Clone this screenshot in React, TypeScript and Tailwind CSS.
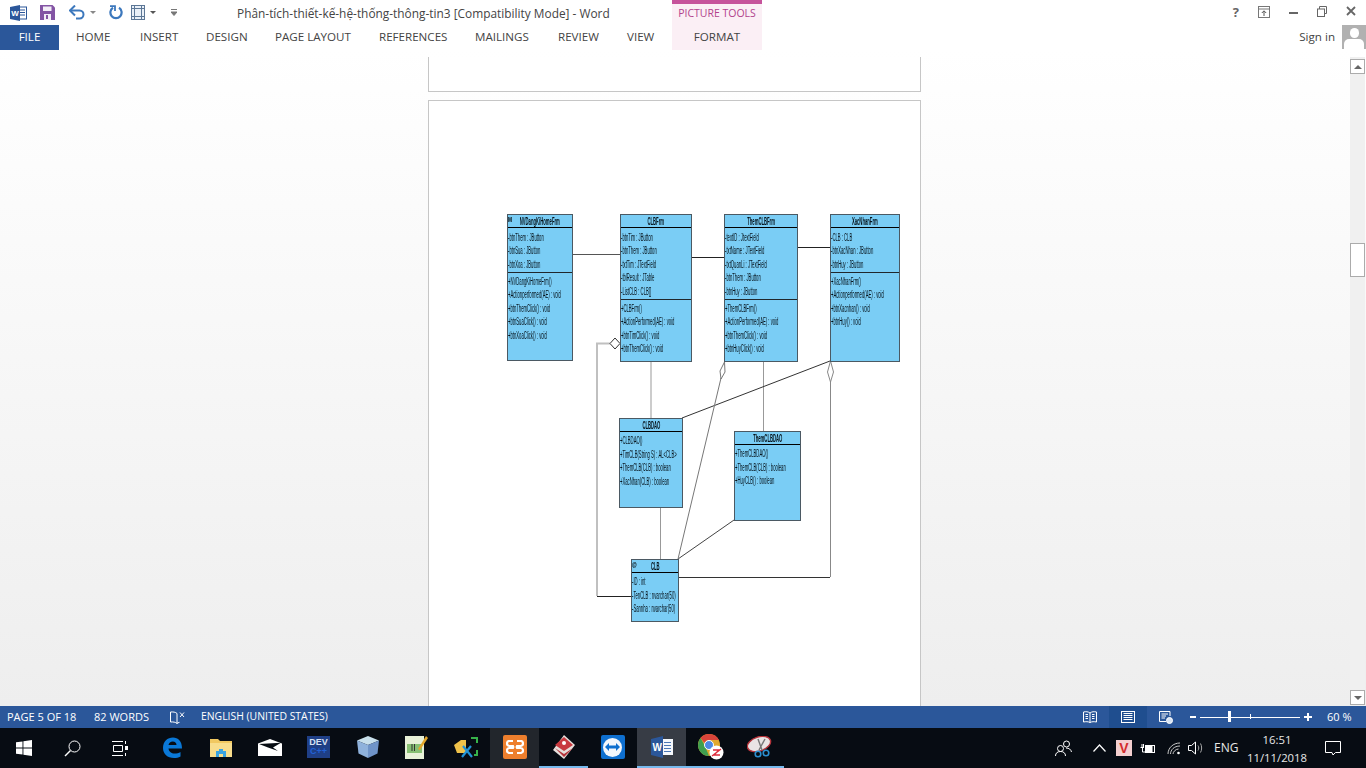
import type { ReactNode } from "react";

const tabs = [
  { label: "HOME", w: "w-[64px]" },
  { label: "INSERT", w: "w-[66px]" },
  { label: "DESIGN", w: "w-[69px]" },
  { label: "PAGE LAYOUT", w: "w-[104px]" },
  { label: "REFERENCES", w: "w-[96px]" },
  { label: "MAILINGS", w: "w-[83px]" },
  { label: "REVIEW", w: "w-[69px]" },
  { label: "VIEW", w: "w-[45px]" },
];

function UmlRow({ text }: { text: string }) {
  return (
    <div className="h-[13.5px] leading-[13.5px] whitespace-nowrap origin-left scale-x-[0.42] text-[#06121a]">
      {text}
    </div>
  );
}

function UmlClass({
  title,
  attrs,
  methods,
  className,
  mark,
}: {
  title: string;
  attrs?: string[];
  methods: string[];
  className: string;
  mark?: string;
}) {
  return (
    <div className={`absolute flex flex-col border border-[#4b5963] bg-[#7acdf5] text-[10px] font-['Liberation_Sans',sans-serif] blur-[0.25px] ${className}`}>
      <div className="relative flex h-[13px] shrink-0 justify-center overflow-hidden border-b border-black font-bold leading-[13px] whitespace-nowrap text-[#06121a]">
        <span className="scale-x-[0.42]">{title}</span>
        {mark && <span className="absolute left-0 top-0 origin-left scale-x-[0.6] text-[8px] leading-[9px] text-black">{mark}</span>}
      </div>
      {attrs && (
        <div className="border-b border-[#20272c] pb-[0.5px] pt-[2.5px]">
          {attrs.map((a) => (
            <UmlRow key={a} text={a} />
          ))}
        </div>
      )}
      <div className="pt-[2px]">
        {methods.map((m) => (
          <UmlRow key={m} text={m} />
        ))}
      </div>
    </div>
  );
}

function Connectors() {
  return (
    <svg className="absolute left-0 top-0 h-[605px] w-[491px]" viewBox="429 101 491 605" fill="none">
      <path d="M573 254.5H620" stroke="#555" />
      <path d="M692 257.5H724" stroke="#222" />
      <path d="M797 247.5H830" stroke="#222" />
      <path d="M610 343.5H597V596" stroke="#c0c0c0" strokeWidth="2" />
      <path d="M597 596.5H631" stroke="#222" />
      <path d="M651 361V418M763.5 361V431M660.5 507V559" stroke="#999" />
      <path d="M682 418L830 361" stroke="#333" />
      <path d="M678 559L734 520" stroke="#444" />
      <path d="M678 559L721 378" stroke="#777" />
      <path d="M830.5 382V577" stroke="#888" />
      <path d="M830 577.5H678" stroke="#333" />
      <path d="M610 343.5L615 338L620 343.5L615 349Z" fill="#fff" stroke="#333" />
      <path d="M724.5 362L720 371L721 379L725 372Z" fill="#fff" stroke="#777" />
      <path d="M830.5 361L833.5 372L830.5 382L827.5 372Z" fill="#fff" stroke="#888" />
    </svg>
  );
}

function QuickAccess() {
  return (
    <div className="flex h-full w-[237px] shrink-0 items-center pl-[10px]">
      <svg width="17" height="16" viewBox="0 0 17 16">
        <rect x="6" y="2" width="10.5" height="12" fill="#fff" stroke="#2b579a" />
        <path d="M9 5h6M9 7.5h6M9 10h6" stroke="#2b579a" />
        <path d="M0 2L10 0V16L0 14Z" fill="#2b579a" />
        <text x="1.2" y="11" fontSize="8" fontWeight="700" fill="#fff" fontFamily="Liberation Sans">W</text>
      </svg>
      <svg className="ml-[13px]" width="15" height="15" viewBox="0 0 15 15">
        <path d="M0 0H12.5L15 2.5V15H0Z" fill="#8354a4" />
        <rect x="3" y="1.5" width="8.5" height="4.5" fill="#f3eef7" />
        <rect x="4" y="9" width="7" height="6" fill="#f3eef7" />
        <rect x="6" y="10" width="2" height="4" fill="#8354a4" />
      </svg>
      <svg className="ml-[14px]" width="16" height="15" viewBox="0 0 16 15" fill="none">
        <path d="M1.5 5.5H10.5C13 5.5 14.5 7.5 14.5 9.5C14.5 11.5 13 13.5 10.5 13.5H7" stroke="#3c78bd" strokeWidth="2" />
        <path d="M6 0.5L1 5.5L6 10.5" stroke="#3c78bd" strokeWidth="2" />
      </svg>
      <svg className="ml-[5px]" width="6" height="4" viewBox="0 0 6 4"><path d="M0 0H6L3 3Z" fill="#888" /></svg>
      <svg className="ml-[13px]" width="14" height="15" viewBox="0 0 14 15" fill="none">
        <path d="M4 2.8A5.6 5.6 0 1 0 10 2.8" stroke="#3c78bd" strokeWidth="2.2" />
        <path d="M1 1.2H6V6" stroke="#3c78bd" strokeWidth="1.8" />
      </svg>
      <svg className="ml-[8px]" width="14" height="15" viewBox="0 0 14 15" fill="none">
        <rect x="0.5" y="0.5" width="13" height="14" fill="#e9f0f8" stroke="#5c7796" />
        <path d="M3.5 0.5V14.5M10.5 0.5V14.5M0.5 3.5H13.5M0.5 11.5H13.5" stroke="#5c7796" />
      </svg>
      <svg className="ml-[5px]" width="6" height="4" viewBox="0 0 6 4"><path d="M0 0H6L3 3Z" fill="#555" /></svg>
      <svg className="ml-[15px]" width="6" height="7" viewBox="0 0 6 7"><path d="M0 0.5H6M0 3H6L3 6.5L0 3" stroke="#777" fill="#777" strokeWidth="1" /></svg>
    </div>
  );
}

function TitleBar() {
  return (
    <div className="flex h-[25px] shrink-0 items-stretch text-[11.88px] text-[#444]">
      <QuickAccess />
      <div className="w-[435px] shrink-0 whitespace-nowrap pt-[4px] leading-[18px]">
        Phân-tích-thiết-kế-hệ-thống-thông-tin3 [Compatibility Mode] - Word
      </div>
      <div className="w-[90px] shrink-0 border-t-4 border-[#c6539b] bg-[#fbeff5] pt-px text-center text-[10.5px] leading-[17px] text-[#b2428c]">
        PICTURE TOOLS
      </div>
      <div className="flex flex-1 items-start justify-end pr-[10px] pt-[6px]">
        <span className="mr-[19px] text-[13px] font-bold leading-[13px] text-[#666]">?</span>
        <svg className="mr-[19px]" width="12" height="12" viewBox="0 0 12 12" fill="none">
          <rect x="0.5" y="0.5" width="11" height="11" stroke="#777" />
          <path d="M0.5 3H11.5" stroke="#777" />
          <path d="M6 10V5M3.8 7L6 4.8L8.2 7" stroke="#555" />
        </svg>
        <div className="mr-[19px] mt-[6px] h-[2px] w-[9px] bg-[#666]" />
        <svg className="mr-[19px]" width="10" height="11" viewBox="0 0 10 11" fill="none">
          <rect x="0.5" y="3" width="7" height="7.5" fill="#fff" stroke="#666" />
          <path d="M2.5 3V0.5H9.5V7.5H7.5" stroke="#666" />
        </svg>
        <svg width="10" height="10" viewBox="0 0 10 10"><path d="M1 1L9 9M9 1L1 9" stroke="#666" strokeWidth="1.8" /></svg>
      </div>
    </div>
  );
}

function TabBar() {
  return (
    <div className="flex h-[25px] shrink-0 items-stretch text-[11.6px] leading-[24px] text-[#444]">
      <div className="mr-[17px] w-[59px] bg-[#2b579a] text-center text-white">FILE</div>
      {tabs.map((t) => (
        <div key={t.label} className={`${t.w} shrink-0 whitespace-nowrap`}>
          {t.label}
        </div>
      ))}
      <div className="w-[90px] shrink-0 bg-[#fbeff5] text-center">FORMAT</div>
      <div className="flex flex-1 justify-end">
        <span className="mr-[7px]">Sign in</span>
        <div className="mb-px flex h-[24px] w-[24px] flex-col items-center overflow-hidden bg-[#b1b1b1]">
          <div className="mt-[3px] h-[11px] w-[9px] rounded-full bg-white" />
          <div className="mt-px h-[10px] w-[20px] rounded-t-[5px] bg-white" />
        </div>
      </div>
    </div>
  );
}

function ScrollBar() {
  return (
    <div className="mr-px mt-[7px] flex w-[15px] shrink-0 flex-col bg-[#f0f0f0] pt-[2px]">
      <div className="flex h-[15px] items-center justify-center border border-[#ababab] bg-white">
        <div className="border-x-[4px] border-b-[4px] border-x-transparent border-b-[#666]" />
      </div>
      <div className="mt-[169px] h-[34px] border border-[#ababab] bg-white" />
      <div className="flex-1" />
      <div className="mb-px flex h-[15px] items-center justify-center border border-[#ababab] bg-white">
        <div className="border-x-[4px] border-t-[4px] border-x-transparent border-t-[#666]" />
      </div>
    </div>
  );
}

function Document() {
  return (
    <div className="flex min-h-0 flex-1 bg-gradient-to-b from-white to-[#eeeeee]">
      <div className="flex min-w-0 flex-1 flex-col pl-[428px] pt-[7px]">
        <div className="h-[35px] w-[493px] shrink-0 border-x border-b border-[#c6c6c6] bg-white" />
        <div className="relative mt-[8px] w-[493px] flex-1 border-x border-t border-[#c6c6c6] bg-white">
          <Connectors />
          <UmlClass
            className="left-[78px] top-[113px] h-[147px] w-[66px]"
            mark="M"
            title="NVDangKiHomeFrm"
            attrs={["-btnThem : JButton", "-btnSua : JButton", "-btnXoa : JButton"]}
            methods={["+NVDangKiHomeFrm()", "+Actionperformed(AE) : void", "+btnThemClick() : void", "+btnSuaClick() : void", "+btnXoaClick() : void"]}
          />
          <UmlClass
            className="left-[191px] top-[113px] h-[148px] w-[72px]"
            title="CLBFrm"
            attrs={["-btnTim : JButton", "-btnThem : JButton", "-txtTim : JTextField", "-tblResult : JTable", "-ListCLB : CLB[]"]}
            methods={["+CLBFrm()", "+ActionPerformed(AE) : void", "+btnTimClick() : void", "+btnThemClick() : void"]}
          />
          <UmlClass
            className="left-[295px] top-[113px] h-[148px] w-[74px]"
            title="ThemCLBFrm"
            attrs={["-textID : JtextField", "-txtName : JTextField", "-txtQuanLi : JTextField", "-btnThem : JButton", "-btnHuy : JButton"]}
            methods={["+ThemCLBFrm()", "+ActionPerformed(AE) : void", "+btnThemClick() : void", "+btnHuyClick() : void"]}
          />
          <UmlClass
            className="left-[401px] top-[113px] h-[148px] w-[70px]"
            title="XacNhanFrm"
            attrs={["-CLB : CLB", "-btnXacNhan : JButton", "-btnHuy : JButton"]}
            methods={["+XacNhanFrm()", "+Actionperformed(AE) : void", "+btnXacnhan() : void", "+btnHuy() : void"]}
          />
          <UmlClass
            className="left-[190px] top-[317px] h-[90px] w-[64px]"
            title="CLBDAO"
            methods={["+CLBDAO()", "+TimCLB(String S) : AL<CLB>", "+ThemCLB(CLB) : boolean", "+XacNhan(CLB) : boolean"]}
          />
          <UmlClass
            className="left-[305px] top-[330px] h-[90px] w-[67px]"
            title="ThemCLBDAO"
            methods={["+ThemCLBDAO()", "+ThemCLB(CLB) : boolean", "+HuyCLB() : boolean"]}
          />
          <UmlClass
            className="left-[202px] top-[458px] h-[63px] w-[48px]"
            mark="@"
            title="CLB"
            methods={["-ID : int", "-TenCLB : nvarchar(50)", "-Sannha : nvarchar(50)"]}
          />
        </div>
      </div>
      <ScrollBar />
    </div>
  );
}

function StatusBar() {
  return (
    <div className="flex h-[22px] shrink-0 items-center bg-[#2b579a] text-[11px] text-white">
      <span className="ml-[7px] w-[75px] whitespace-nowrap">PAGE 5 OF 18</span>
      <span className="ml-[12px] w-[76px] whitespace-nowrap">82 WORDS</span>
      <svg width="15" height="13" viewBox="0 0 15 13" fill="none" stroke="#fff">
        <path d="M7 2.5C5.5 1 3 0.8 0.5 1V11C3 10.8 5.5 11 7 12.5V2.5ZM7 12.5C7.5 12 8.5 11.5 9.5 11.3" />
        <path d="M10 1.5L14 6M14 1.5L10 6" />
      </svg>
      <span className="ml-[16px] whitespace-nowrap text-[10.4px]">ENGLISH (UNITED STATES)</span>
      <div className="flex-1" />
      <svg width="14" height="12" viewBox="0 0 14 12" fill="none" stroke="#fff">
        <path d="M7 2C5 0.5 3 0.5 0.5 1V11C3 10.5 5 10.5 7 11.5C9 10.5 11 10.5 13.5 11V1C11 0.5 9 0.5 7 2ZM7 2V11.5" />
        <path d="M2.5 3.5H5M2.5 5.5H5M2.5 7.5H5M9 3.5H11.5M9 5.5H11.5M9 7.5H11.5" />
      </svg>
      <div className="ml-[12px] flex h-full w-[38px] items-center justify-center bg-[#1f4e8f]">
        <svg width="14" height="12" viewBox="0 0 14 12" fill="none" stroke="#fff">
          <rect x="0.5" y="0.5" width="13" height="11" />
          <path d="M2.5 2.5H11.5M2.5 4.5H11.5M2.5 6.5H11.5M2.5 8.5H11.5" />
        </svg>
      </div>
      <svg className="ml-[12px]" width="14" height="13" viewBox="0 0 14 13" fill="none" stroke="#fff">
        <path d="M7 10.5H0.5V0.5H11V5M2.5 3H9M2.5 5H7M2.5 7H6" />
        <circle cx="10.5" cy="9.5" r="3" fill="#d8e4f4" />
      </svg>
      <div className="ml-[17px] h-[2px] w-[6px] bg-white" />
      <div className="relative ml-[4px] flex h-[12px] w-[100px] items-center">
        <div className="h-px w-full bg-white" />
        <div className="absolute left-[28px] top-0 h-[11px] w-[3px] bg-white" />
        <div className="absolute left-[50px] top-[3px] h-[5px] w-px bg-white" />
      </div>
      <span className="relative ml-[4px] h-[8px] w-[8px]">
        <span className="absolute left-0 top-[3px] h-[2px] w-[8px] bg-white" />
        <span className="absolute left-[3px] top-0 h-[8px] w-[2px] bg-white" />
      </span>
      <span className="ml-[15px] mr-[15px] w-[24px] whitespace-nowrap">60 %</span>
    </div>
  );
}

function TaskCell({ children, state }: { children: ReactNode; state?: "open" | "active" | "hover" }) {
  const look =
    state === "active"
      ? "bg-[#373c45] border-[#76b9ed]"
      : state === "hover"
        ? "bg-[#22262c] border-transparent"
        : state === "open"
          ? "border-[#76b9ed]"
          : "border-transparent";
  return <div className={`flex h-full w-[49px] shrink-0 items-center justify-center border-b-2 ${look}`}>{children}</div>;
}

function SystemTray() {
  return (
    <div className="ml-auto flex h-full items-center text-[12px] text-[#e8e8e8]">
      <svg width="17" height="17" viewBox="0 0 17 17" fill="none" stroke="#fff">
        <circle cx="5.5" cy="8.5" r="3" />
        <path d="M0.5 16C0.5 13 2.5 11.5 5.5 11.5C8.5 11.5 10.5 13 10.5 16" />
        <circle cx="11.5" cy="4" r="3" />
        <path d="M11 8C14 8 16 9.5 16.5 12" />
      </svg>
      <svg className="ml-[21px]" width="13" height="8" viewBox="0 0 13 8" fill="none" stroke="#fff"><path d="M0.5 7.5L6.5 1L12.5 7.5" strokeWidth="1.2" /></svg>
      <div className="ml-[10px] flex h-[16px] w-[16px] items-center justify-center bg-[#f4cfcf] text-[14px] font-bold leading-none text-[#d22c2c] font-['Liberation_Sans',sans-serif]">V</div>
      <svg className="ml-[8px]" width="16" height="11" viewBox="0 0 16 11" fill="none" stroke="#fff">
        <rect x="5.5" y="2.5" width="9" height="7" />
        <rect x="6" y="3" width="6" height="6" fill="#fff" />
        <path d="M0.5 4.5H4M2 1V4M3.5 1V4M2.5 5V9H5" />
      </svg>
      <svg className="ml-[11px]" width="14" height="13" viewBox="0 0 14 13" fill="none" stroke="#c9c9c9">
        <path d="M1 12C1 6 6 1 13 1M3.5 12C3.5 8 7 4 13 4M6 12C6 10 8.5 7 11.5 7" />
        <circle cx="11.5" cy="11" r="1.3" fill="#fff" stroke="none" />
      </svg>
      <svg className="ml-[7px]" width="16" height="14" viewBox="0 0 16 14" fill="none" stroke="#fff">
        <path d="M0.5 4.5H3.5L7.5 1V13L3.5 9.5H0.5Z" />
        <path d="M10 4.5C11 6 11 8 10 9.5M12.5 2.5C14 5 14 9 12.5 11.5" stroke="#aaa" />
      </svg>
      <span className="ml-[10px] w-[24px] whitespace-nowrap">ENG</span>
      <div className="ml-[7px] w-[64px] pt-[2px] text-center text-[11.3px] leading-[18px]">
        <div>16:51</div>
        <div className="whitespace-nowrap">11/11/2018</div>
      </div>
      <svg className="ml-[16px] mr-[25px]" width="16" height="15" viewBox="0 0 16 15" fill="none" stroke="#fff">
        <path d="M0.5 0.5H15.5V11.5H10.5L8 14L7 11.5H0.5Z" />
      </svg>
    </div>
  );
}

function TaskBar() {
  return (
    <div className="flex h-[40px] shrink-0 items-center bg-[#070c13]">
      <div className="flex h-full w-[147px] shrink-0 items-center">
        <div className="flex w-[48px] justify-center">
          <svg width="16" height="16" viewBox="0 0 16 16" fill="#fff"><path d="M0 2.3L6.5 1.4V7.5H0ZM7.4 1.2L16 0V7.5H7.4ZM0 8.4H6.5V14.6L0 13.7ZM7.4 8.4H16V16L7.4 14.8Z" /></svg>
        </div>
        <div className="flex w-[48px] justify-center">
          <svg width="17" height="17" viewBox="0 0 17 17" fill="none" stroke="#fff"><circle cx="10.5" cy="6.5" r="5.5" /><path d="M6.5 10.5L1 16" strokeWidth="1.5" /></svg>
        </div>
        <div className="flex w-[48px] justify-center">
          <svg width="16" height="15" viewBox="0 0 16 15" fill="none" stroke="#fff">
            <path d="M0 0.5H11M0 14.5H11M1.5 4.5H10.5V10.5H1.5ZM13.5 0V3M13.5 12V15" />
            <rect x="13" y="5" width="3" height="4" fill="#fff" stroke="none" />
          </svg>
        </div>
      </div>
      <TaskCell>
        <svg width="20" height="21" viewBox="0 0 20 21">
          <path d="M1 11C1 4.5 5.5 0.5 11 0.5C16 0.5 20 4 20 11.5H6.5C7 15 9.5 16.5 12.5 16.5C14.8 16.5 16.8 16 18.5 15V19.5C16.5 20.5 14.5 21 12 21C5.5 21 1 17 1 11ZM6.5 8H14.5C14.5 5.8 13 4.5 10.8 4.5C8.5 4.5 7 5.8 6.5 8Z" fill="#0a78d7" />
        </svg>
      </TaskCell>
      <TaskCell>
        <svg width="22" height="19" viewBox="0 0 22 19">
          <path d="M0 1H8L10 3H22V19H0Z" fill="#f1c860" />
          <path d="M0 5H22V19H0Z" fill="#f8dd8c" />
          <path d="M6 19V13H9V11H13V13H16V19H13V16H9V19Z" fill="#3aa3e0" />
        </svg>
      </TaskCell>
      <TaskCell>
        <svg width="24" height="17" viewBox="0 0 24 17">
          <path d="M0 4.5L12 0L24 4.5V17H0Z" fill="#fff" />
          <path d="M1 5L23 3.8L15 8.5L20 12L10 8.5Z" fill="#070c13" />
        </svg>
      </TaskCell>
      <TaskCell>
        <div className="flex h-[22px] w-[23px] flex-col items-center justify-center bg-[#1f3f86] font-['Liberation_Sans',sans-serif] font-bold leading-[9px]">
          <span className="text-[9px] text-[#d8e2f4]">DEV</span>
          <span className="text-[9px] text-[#2262d6]">C++</span>
        </div>
      </TaskCell>
      <TaskCell>
        <svg width="22" height="22" viewBox="0 0 22 22">
          <path d="M11 0L22 4.5L11 9L0 4.5Z" fill="#c8e0ec" />
          <path d="M0 4.5L11 9V22L1.5 17.5Z" fill="#8fb2dc" />
          <path d="M22 4.5L11 9V22L20.5 17.5Z" fill="#6f94c8" />
        </svg>
      </TaskCell>
      <TaskCell>
        <svg width="23" height="24" viewBox="0 0 23 24">
          <rect x="0" y="1" width="19" height="23" fill="#e8f1d8" />
          <rect x="2" y="9" width="15" height="9" fill="#87c073" />
          <path d="M7 9V16M9.5 9V16" stroke="#333" />
          <path d="M13 14L21 1L23 3L15 15Z" fill="#e4a72a" />
        </svg>
      </TaskCell>
      <TaskCell>
        <svg width="24" height="21" viewBox="0 0 24 21" fill="none">
          <path d="M0 8L7 3H12V16H3Z" fill="#efc24a" />
          <path d="M17 1H23V6M23 13V18H20" stroke="#37b34a" strokeWidth="2" />
          <path d="M8 20L17 9M9 9L18 20" stroke="#2293d6" strokeWidth="2.2" />
        </svg>
      </TaskCell>
      <TaskCell state="hover">
        <div className="flex h-[24px] w-[24px] items-center justify-center rounded-[2px] bg-[#ee7f2d]">
          <svg width="18" height="14" viewBox="0 0 18 14" fill="none" stroke="#fff" strokeWidth="2.2">
            <path d="M7 1H3.5A2.5 2.5 0 0 0 3.5 6H7A2 2 0 0 1 7 8H3.5A2.5 2.5 0 0 0 3.5 13H7M11 1H14.5A2.5 2.5 0 0 1 14.5 6H11A2 2 0 0 0 11 8H14.5A2.5 2.5 0 0 1 14.5 13H11" />
          </svg>
        </div>
      </TaskCell>
      <TaskCell state="open">
        <svg width="22" height="24" viewBox="0 0 22 24">
          <path d="M11 0L22 10L11 24L0 15Z" fill="#e7e0dc" />
          <path d="M11 2L20 10L11 16L2 10Z" fill="#c8393f" />
          <path d="M2 13L11 19L20 13L11 22Z" fill="#b5333a" />
          <circle cx="11" cy="8" r="2" fill="#fff" />
        </svg>
      </TaskCell>
      <TaskCell>
        <div className="flex h-[24px] w-[24px] items-center justify-center rounded-[2px] bg-[#0e6fcf]">
          <div className="flex h-[19px] w-[19px] items-center justify-center rounded-full bg-[#f3f7fc]">
            <svg width="15" height="8" viewBox="0 0 15 8"><path d="M0 4L4 0V2.5H11V0L15 4L11 8V5.5H4V8Z" fill="#0e6fcf" /></svg>
          </div>
        </div>
      </TaskCell>
      <TaskCell state="active">
        <svg width="22" height="22" viewBox="0 0 22 22">
          <rect x="8" y="3" width="14" height="16" fill="#f4f7fb" />
          <path d="M13 6.5H20M13 9.5H20M13 12.5H20M13 15.5H20" stroke="#4a76b5" />
          <path d="M0 3L12 0V22L0 19Z" fill="#2b579a" />
          <text x="1.5" y="14.5" fontSize="10" fontWeight="700" fill="#fff" fontFamily="Liberation Sans">W</text>
        </svg>
      </TaskCell>
      <TaskCell state="open">
        <svg width="26" height="26" viewBox="0 0 26 26">
          <circle cx="11" cy="11" r="11" fill="#e0a92e" />
          <path d="M11 0A11 11 0 0 1 21 6H11A5 5 0 0 0 6.5 9L2.5 4A11 11 0 0 1 11 0Z" fill="#d8443a" />
          <path d="M0 11A11 11 0 0 1 2.5 4L7 12L11 22A11 11 0 0 1 0 11Z" fill="#3f9f4f" />
          <circle cx="11" cy="11" r="4.5" fill="#4d89e3" stroke="#fff" />
          <circle cx="18.5" cy="18.5" r="7" fill="#fff" />
          <path d="M14 22L23 15M15 16H21L16 21H22" stroke="#dd2c3c" strokeWidth="1.4" fill="none" />
        </svg>
      </TaskCell>
      <TaskCell state="open">
        <svg width="25" height="23" viewBox="0 0 25 23" fill="none">
          <ellipse cx="12" cy="8" rx="12" ry="7" transform="rotate(-18 12 8)" fill="#e9e4e4" stroke="#b5333a" strokeWidth="1.4" />
          <path d="M11 3L15 14M18 3L12 14" stroke="#777" strokeWidth="1.4" />
          <circle cx="11" cy="18" r="2.8" stroke="#2b8fd0" strokeWidth="1.6" />
          <circle cx="19" cy="17" r="2.8" stroke="#2b8fd0" strokeWidth="1.6" />
        </svg>
      </TaskCell>
      <SystemTray />
    </div>
  );
}

export default function App() {
  return (
    <div className="flex h-[768px] w-[1366px] flex-col overflow-hidden bg-white font-['Open_Sans','Noto_Sans',sans-serif]">
      <TitleBar />
      <TabBar />
      <Document />
      <StatusBar />
      <TaskBar />
    </div>
  );
}
